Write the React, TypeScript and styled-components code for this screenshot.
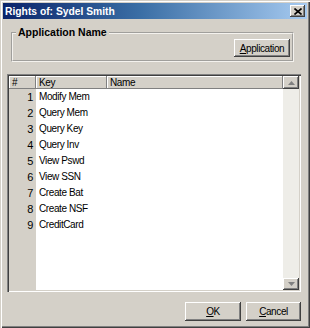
import * as React from "react";
import styled, { createGlobalStyle } from "styled-components";

const colors = {
  face: "#d4d0c8",
  shadow: "#808080",
  dark: "#404040",
  light: "#ffffff",
  track: "#eeede8",
};

const GlobalStyle = createGlobalStyle`
  html, body {
    margin: 0;
    padding: 0;
    background: ${colors.face};
  }
  * {
    box-sizing: border-box;
  }
`;

const regularFont = `"Liberation Sans", Arial, sans-serif`;

const Window = styled.div`
  width: 310px;
  height: 328px;
  padding: 3px 3px 0 3px;
  background: ${colors.face};
  display: flex;
  flex-direction: column;
  font-family: ${regularFont};
  font-size: 10px;
  letter-spacing: -0.4px;
  color: #000;
  box-shadow: inset 1px 1px ${colors.face}, inset 2px 2px ${colors.light},
    inset -1px -1px ${colors.dark}, inset -2px -2px ${colors.shadow};
`;

const TitleBar = styled.div`
  height: 16px;
  display: flex;
  align-items: center;
  justify-content: space-between;
  padding: 0 2px 0 2px;
  background: linear-gradient(90deg, #0a246a 0%, #3a6ea5 45%, #a6caf0 100%);
  color: #fff;
  font-weight: bold;
  font-size: 10.3px;
  letter-spacing: 0;
`;

const CloseButton = styled.div`
  width: 15px;
  height: 12px;
  display: flex;
  align-items: center;
  justify-content: center;
  background: ${colors.face};
  box-shadow: inset -1px -1px ${colors.dark}, inset 1px 1px ${colors.light},
    inset -2px -2px ${colors.shadow};
  svg {
    display: block;
  }
`;

const Content = styled.div`
  flex: 1;
  display: flex;
  flex-direction: column;
  padding: 0 6px 0 4px;
`;

const GroupBox = styled.fieldset`
  margin: 7px 7px 0 4px;
  padding: 0 2px 3px 3px;
  border: 2px groove #f4f2ee;
  display: flex;
  justify-content: flex-end;
  min-width: 0;
`;

const Legend = styled.legend`
  padding: 0 2px;
  margin: 0;
  height: 13px;
  line-height: 13px;
  font-weight: bold;
  font-size: 10.5px;
  letter-spacing: 0;
`;

const Button = styled.button<{ $width: number; $height?: number }>`
  width: ${(p) => p.$width}px;
  height: ${(p) => p.$height ?? 19}px;
  padding: 0;
  border: none;
  background: ${colors.face};
  font-family: ${regularFont};
  font-size: 10px;
  letter-spacing: -0.4px;
  color: #000;
  box-shadow: inset -1px -1px ${colors.dark}, inset 1px 1px ${colors.light},
    inset -2px -2px ${colors.shadow}, inset 2px 2px ${colors.face};
  u {
    text-decoration: underline;
  }
`;

const Grid = styled.div`
  margin-top: 12px;
  height: 218px;
  display: flex;
  background: #fff;
  box-shadow: inset 1px 1px ${colors.shadow}, inset 2px 2px ${colors.dark},
    inset -1px -1px ${colors.light}, inset -2px -2px ${colors.face};
  padding: 2px;
`;

const TableArea = styled.div`
  flex: 1;
  display: flex;
  flex-direction: column;
  min-width: 0;
`;

const HeaderRow = styled.div`
  display: grid;
  grid-template-columns: 27px 71px 1fr;
  height: 13px;
  background: ${colors.face};
`;

const HeaderCell = styled.div`
  padding-left: 3px;
  line-height: 13px;
  box-shadow: inset -1px -1px ${colors.shadow}, inset 1px 1px ${colors.light};
`;

const Body = styled.div`
  flex: 1;
  background: linear-gradient(to right, ${colors.face} 27px, #fff 27px);
`;

const Row = styled.div`
  display: grid;
  grid-template-columns: 27px 71px 1fr;
  height: 16px;
  line-height: 16px;
`;

const NumCell = styled.div`
  text-align: right;
  padding-right: 3px;
  font-size: 11px;
`;

const KeyCell = styled.div`
  padding-left: 3px;
  white-space: nowrap;
`;

const ScrollBar = styled.div`
  width: 16px;
  display: flex;
  flex-direction: column;
  background: ${colors.track};
`;

const ScrollButton = styled.div<{ $height: number }>`
  height: ${(p) => p.$height}px;
  display: flex;
  align-items: center;
  justify-content: center;
  background: ${colors.face};
  box-shadow: inset -1px -1px ${colors.dark}, inset 1px 1px ${colors.light},
    inset -2px -2px ${colors.shadow};
`;

const Track = styled.div`
  flex: 1;
`;

const Footer = styled.div`
  display: flex;
  justify-content: flex-end;
  gap: 5px;
  margin-top: 10px;
`;

const Arrow = ({ up }: { up?: boolean }) => (
  <svg width="7" height="4" viewBox="0 0 7 4">
    <path d={up ? "M3.5 0 L7 4 L0 4 Z" : "M0 0 L7 0 L3.5 4 Z"} fill="#808080" />
  </svg>
);

const keys = [
  "Modify Mem",
  "Query Mem",
  "Query Key",
  "Query Inv",
  "View Pswd",
  "View SSN",
  "Create Bat",
  "Create NSF",
  "CreditCard",
];

export default function App() {
  return (
    <>
      <GlobalStyle />
      <Window>
        <TitleBar>
          <span>Rights of: Sydel Smith</span>
          <CloseButton>
            <svg width="8" height="7" viewBox="0 0 8 7">
              <path d="M0.5 0.5 L7.5 6.5 M7.5 0.5 L0.5 6.5" stroke="#000" strokeWidth="1.6" />
            </svg>
          </CloseButton>
        </TitleBar>
        <Content>
          <GroupBox>
            <Legend>Application Name</Legend>
            <Button $width={56} $height={18}>
              <u>A</u>pplication
            </Button>
          </GroupBox>
          <Grid>
            <TableArea>
              <HeaderRow>
                <HeaderCell>#</HeaderCell>
                <HeaderCell>Key</HeaderCell>
                <HeaderCell>Name</HeaderCell>
              </HeaderRow>
              <Body>
                {keys.map((k, i) => (
                  <Row key={k}>
                    <NumCell>{i + 1}</NumCell>
                    <KeyCell>{k}</KeyCell>
                    <div />
                  </Row>
                ))}
              </Body>
            </TableArea>
            <ScrollBar>
              <ScrollButton $height={13}>
                <Arrow up />
              </ScrollButton>
              <Track />
              <ScrollButton $height={12}>
                <Arrow />
              </ScrollButton>
            </ScrollBar>
          </Grid>
          <Footer>
            <Button $width={56}>
              <u>O</u>K
            </Button>
            <Button $width={55}>
              <u>C</u>ancel
            </Button>
          </Footer>
        </Content>
      </Window>
    </>
  );
}
